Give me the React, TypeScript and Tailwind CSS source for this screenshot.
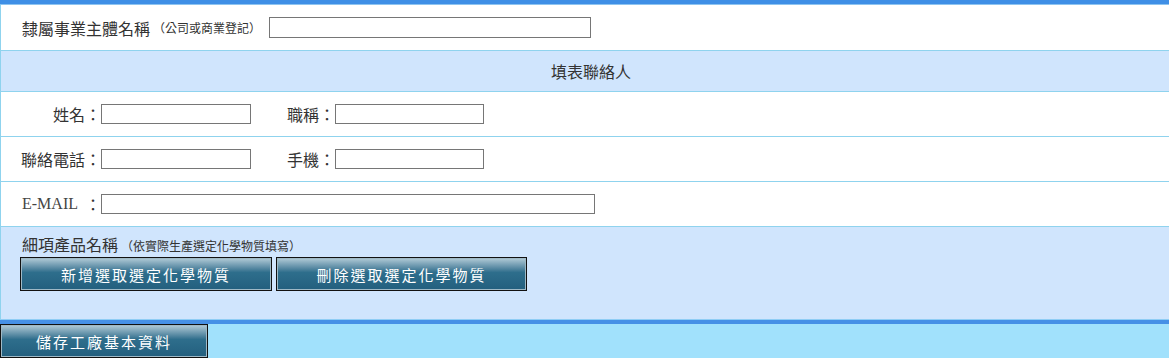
const cjk = "font-['Noto_Sans_CJK_TC','Liberation_Sans',sans-serif]";

function Field({ width }: { width: string }) {
  return (
    <input
      type="text"
      className={`${width} h-[20px] border border-[#767676] bg-white outline-none`}
    />
  );
}

function BlueButton({ label, width }: { label: string; width: string }) {
  return (
    <button
      className={`${width} h-[34px] border border-[#111] bg-gradient-to-b from-[#b3ccd8] via-[#2e6e8c] via-45% to-[#235f7e] shadow-[inset_0_0_0_1px_#9fb9c6] text-white text-[15px] tracking-[2px] leading-none ${cjk}`}
    >
      {label}
    </button>
  );
}

export default function App() {
  return (
    <div className={`w-[1169px] h-[358px] bg-[#a1e1fc] text-[#333] ${cjk}`}>
      <div className="h-[4px] bg-[#3f8fe6]" />
      <div className="h-[1px] bg-[#8ec4f0]" />

      <div className="border-l border-[#8fd3ee] bg-white">
        <div className="h-[46px] flex items-center pl-[21px] border-b border-[#8fd3ee]">
          <span className="text-[16px] leading-none">隸屬事業主體名稱</span>
          <span className="text-[12px] leading-none ml-[3px] mr-[8px]">（公司或商業登記）</span>
          <input
            type="text"
            className="w-[322px] h-[21px] border border-[#767676] bg-white outline-none"
          />
        </div>

        <div className="h-[41px] flex items-center justify-center bg-[#d0e5fd] border-b border-[#8fd3ee] text-[16px] leading-none pl-[12px]">
          填表聯絡人
        </div>

        <div className="h-[45px] flex items-center border-b border-[#8fd3ee]">
          <span className="w-[100px] text-right text-[16px] leading-none">姓名：</span>
          <Field width="w-[150px]" />
          <span className="w-[84px] text-right text-[16px] leading-none">職稱：</span>
          <Field width="w-[149px]" />
        </div>

        <div className="h-[45px] flex items-center border-b border-[#8fd3ee]">
          <span className="w-[100px] text-right text-[16px] leading-none">聯絡電話：</span>
          <Field width="w-[150px]" />
          <span className="w-[84px] text-right text-[16px] leading-none">手機：</span>
          <Field width="w-[149px]" />
        </div>

        <div className="h-[45px] flex items-center border-b border-[#8fd3ee]">
          <span className="w-[100px] pl-[21px] flex items-center text-[16px] leading-none">
            <span className="font-['Liberation_Serif',serif] text-[#444]">E-MAIL</span>
            <span className="ml-auto">：</span>
          </span>
          <Field width="w-[494px]" />
        </div>

        <div className="h-[92px] bg-[#d0e5fd] pl-[19px] pt-[9px]">
          <div className="flex items-end pl-[2px]">
            <span className="text-[16px] leading-none">細項產品名稱</span>
            <span className="text-[12px] leading-none ml-[3px]">（依實際生產選定化學物質填寫）</span>
          </div>
          <div className="flex gap-[4px] mt-[5px]">
            <BlueButton label="新增選取選定化學物質" width="w-[252px]" />
            <BlueButton label="刪除選取選定化學物質" width="w-[251px]" />
          </div>
        </div>
      </div>

      <div className="h-[1px] bg-[#8fcdf5]" />
      <div className="h-[4px] bg-[#4690e6]" />

      <BlueButton label="儲存工廠基本資料" width="w-[208px]" />
    </div>
  );
}
